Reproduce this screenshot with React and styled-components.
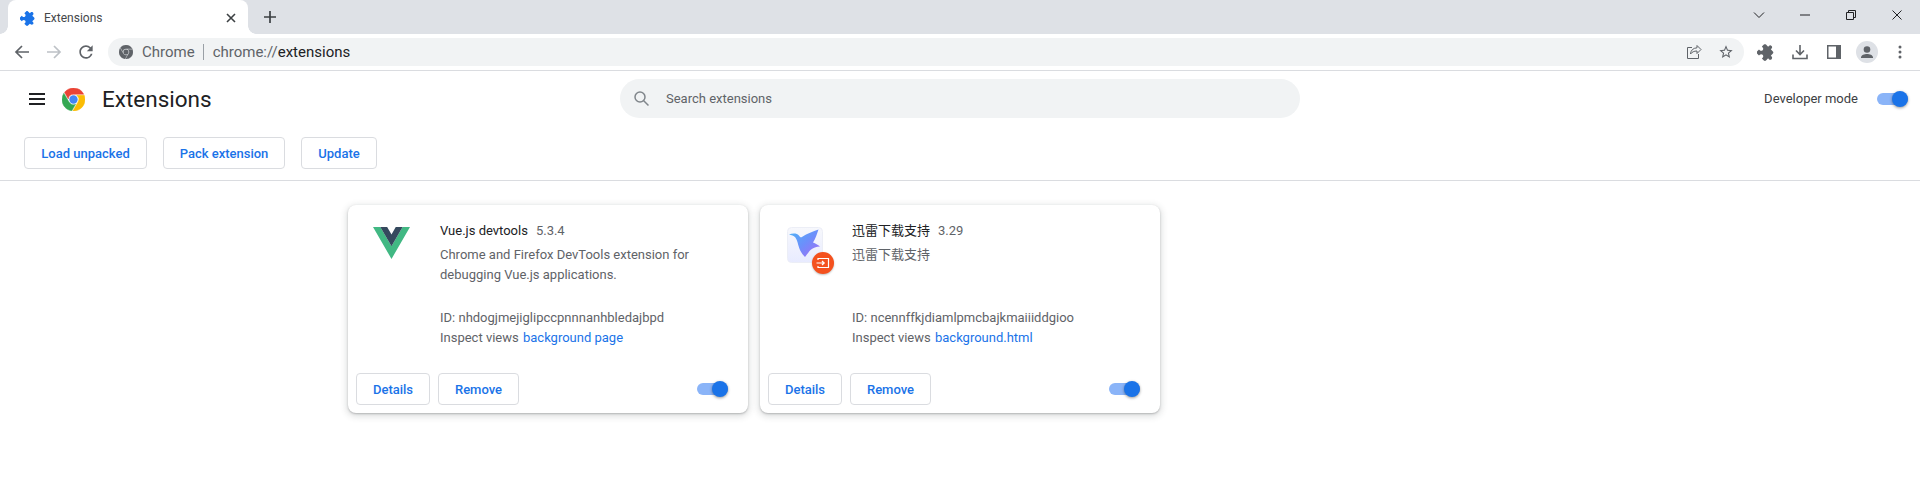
import React from 'react'
import styled, { createGlobalStyle } from 'styled-components'

const Global = createGlobalStyle`
  html, body { margin: 0; padding: 0; background: #fff; }
  body { font-family: Roboto, "Noto Sans CJK SC", sans-serif; font-size: 13px; color: #5f6368; overflow: hidden; }
`

const extensionPath = 'M20.5 11H19V7c0-1.1-.9-2-2-2h-4V3.5C13 2.12 11.88 1 10.5 1S8 2.12 8 3.5V5H4c-1.1 0-1.99.9-1.99 2v3.8H3.5c1.49 0 2.7 1.21 2.7 2.7s-1.21 2.7-2.7 2.7H2V20c0 1.1.9 2 2 2h3.8v-1.5c0-1.49 1.21-2.7 2.7-2.7 1.49 0 2.7 1.21 2.7 2.7V22H17c1.1 0 2-.9 2-2v-4h1.5c1.38 0 2.5-1.12 2.5-2.5S21.88 11 20.5 11z'
const chromeParts = {
  red: 'M12 0C8.21 0 4.831 1.757 2.632 4.501l3.953 6.848A5.454 5.454 0 0 1 12 6.545h10.691A12 12 0 0 0 12 0z',
  green: 'M1.931 5.47A11.943 11.943 0 0 0 0 12c0 6.012 4.42 10.991 10.189 11.864l3.953-6.847a5.45 5.45 0 0 1-6.865-2.29z',
  yellow: 'M15.273 7.636a5.446 5.446 0 0 1 1.45 7.09l.002.001h-.002l-5.344 9.257c.206.01.413.016.621.016 6.627 0 12-5.373 12-12 0-1.54-.29-3.011-.818-4.364z',
  blue: 'M12 16.364a4.364 4.364 0 1 1 0-8.728 4.364 4.364 0 0 1 0 8.728Z',
}

const PuzzleIcon = ({ size, color }) => (
  <svg width={size} height={size} viewBox="0 0 24 24"><path fill={color} d={extensionPath} transform="rotate(45 12 12) translate(1 0)" /></svg>
)

const ChromeLogo = ({ size, mono }) => (
  <svg width={size} height={size} viewBox="0 0 24 24">
    <path fill={mono || '#ea4335'} stroke={mono || '#ea4335'} strokeWidth=".5" d={chromeParts.red} />
    <path fill={mono || '#34a853'} stroke={mono || '#34a853'} strokeWidth=".5" d={chromeParts.green} />
    <path fill={mono || '#fbbc04'} stroke={mono || '#fbbc04'} strokeWidth=".5" d={chromeParts.yellow} />
    <path fill={mono || '#4285f4'} d={chromeParts.blue} />
  </svg>
)

const VueLogo = () => (
  <svg width="37" height="32" viewBox="0 0 256 221">
    <path fill="#41b883" d="M0 0l128 220.8L256 0h-51.2L128 132.48 50.56 0z" />
    <path fill="#35495e" d="M50.56 0L128 133.12 204.8 0h-47.36L128 51.2 97.92 0z" />
  </svg>
)

const BirdLogo = () => (
  <svg width="36" height="36" viewBox="0 0 36 36">
    <defs>
      <linearGradient id="birdBg" x1="0" y1="0" x2="0" y2="1">
        <stop offset="0" stopColor="#f7f8fc" />
        <stop offset="1" stopColor="#e8ebff" />
      </linearGradient>
      <linearGradient id="birdFill" x1="0" y1="0" x2="1" y2="1">
        <stop offset="0" stopColor="#4db5f5" />
        <stop offset=".5" stopColor="#6c8ffb" />
        <stop offset="1" stopColor="#a96af4" />
      </linearGradient>
    </defs>
    <rect x=".5" y=".5" width="35" height="35" rx="4" fill="url(#birdBg)" stroke="#eceef6" />
    <path fill="url(#birdFill)" d="M2 7.5C4.500 6.500 7.500 6.200 9.800 7c1.500.6 2.400 1.800 3.200 3 .8.6 1.500.4 2.300-.2C20 6.500 26 4.500 31.500 2.500 30 7 28.500 11.500 26 15.500c2.500.8 4.800 2.400 7 4-3.800.2-6.800 1.200-9.200 3.200-2 1.800-3.800 4.800-5.800 7.300-2.500-2.500-4.600-5.500-5.800-9C10.800 17 10.300 13 8.200 10.300 6.800 8.800 4.500 8 2 7.500z" />
  </svg>
)

const Page = styled.div`
  width: 1920px;
  height: 495px;
  display: flex;
  flex-direction: column;
`
const TabStrip = styled.div`
  height: 34px;
  background: #dee1e6;
  display: flex;
  align-items: flex-end;
  padding-left: 8px;
`
const Tab = styled.div`
  position: relative;
  width: 240px;
  height: 34px;
  box-sizing: border-box;
  background: #fff;
  border-radius: 8px 8px 0 0;
  padding: 2px 9px 0 12px;
  display: flex;
  align-items: center;
  gap: 8px;
  &::before, &::after {
    content: '';
    position: absolute;
    bottom: 0;
    width: 8px;
    height: 8px;
  }
  &::before {
    left: -8px;
    background: radial-gradient(circle at 0 0, #dee1e6 7.5px, #fff 8px);
  }
  &::after {
    right: -8px;
    background: radial-gradient(circle at 100% 0, #dee1e6 7.5px, #fff 8px);
  }
`
const TabTitle = styled.span`
  flex: 1;
  font-size: 12px;
  color: #45474a;
`
const IconSlot = styled.span`
  width: 16px;
  height: 16px;
  display: flex;
  align-items: center;
  justify-content: center;
  flex: none;
`
const NewTab = styled(IconSlot)`
  margin-left: 14px;
  align-self: center;
`
const StripSpacer = styled.div`
  flex: 1;
`
const WindowControls = styled.div`
  display: flex;
  align-self: flex-start;
`
const WindowButton = styled.div`
  width: 46px;
  height: 30px;
  display: flex;
  align-items: center;
  justify-content: center;
`
const Toolbar = styled.div`
  height: 36px;
  background: #fff;
  border-bottom: 1px solid #dadce0;
  display: flex;
  align-items: center;
  padding-left: 6px;
`
const NavButton = styled.div`
  width: 32px;
  height: 32px;
  display: flex;
  align-items: center;
  justify-content: center;
  flex: none;
`
const Omnibox = styled.div`
  width: 1636px;
  height: 28px;
  margin-left: 6px;
  border-radius: 14px;
  background: #f1f3f4;
  display: flex;
  align-items: center;
  padding: 0 2px 0 11px;
  box-sizing: border-box;
  font-size: 15px;
  flex: none;
`
const Scheme = styled.span`
  color: #5f6368;
  margin-left: 9px;
`
const Divider = styled.span`
  width: 1px;
  height: 16px;
  background: #9aa0a6;
  margin: 0 9px 0 8px;
`
const UrlHost = styled.span`
  color: #5f6368;
`
const UrlPath = styled.span`
  color: #202124;
`
const OmniSpacer = styled.div`
  flex: 1;
`
const OmniAction = styled.div`
  width: 32px;
  display: flex;
  justify-content: center;
`
const ToolActions = styled.div`
  display: flex;
  align-items: center;
  margin-left: 5px;
`
const ToolAction = styled.div`
  width: ${p => p.$w || 34}px;
  height: 32px;
  display: flex;
  align-items: center;
  justify-content: center;
`
const Avatar = styled.div`
  width: 22px;
  height: 22px;
  border-radius: 50%;
  background: #dee1e6;
  display: flex;
  align-items: center;
  justify-content: center;
  overflow: hidden;
`
const Header = styled.div`
  height: 109px;
  border-bottom: 1px solid #dadce0;
  display: flex;
  flex-direction: column;
  flex: none;
`
const TopRow = styled.div`
  height: 55px;
  display: grid;
  grid-template-columns: 1fr 680px 1fr;
  align-items: center;
`
const Brand = styled.div`
  display: flex;
  align-items: center;
  padding-left: 29px;
  padding-top: 1px;
`
const Hamburger = styled.div`
  width: 16px;
  height: 12px;
  border-top: 2px solid #202124;
  border-bottom: 2px solid #202124;
  box-sizing: border-box;
  position: relative;
  margin-right: 17px;
  &::after {
    content: '';
    position: absolute;
    left: 0;
    right: 0;
    top: 3px;
    height: 2px;
    background: #202124;
  }
`
const Title = styled.h1`
  margin: 0 0 0 17px;
  font-size: 22.5px;
  font-weight: 400;
  color: #202124;
`
const Search = styled.div`
  height: 39px;
  border-radius: 20px;
  background: #f1f3f4;
  display: flex;
  align-items: center;
  padding-left: 13px;
  gap: 16px;
  font-size: 13px;
  color: #5f6368;
`
const DevMode = styled.div`
  display: flex;
  align-items: center;
  justify-content: flex-end;
  padding-right: 12px;
  gap: 19px;
  color: #3c4043;
`
const Actions = styled.div`
  display: flex;
  gap: 16px;
  padding: 11px 0 0 24px;
`
const Button = styled.button`
  height: 32px;
  padding: 0;
  width: ${p => p.$w}px;
  border: 1px solid #dadce0;
  border-radius: 4px;
  background: #fff;
  color: #1a73e8;
  font: 500 13px Roboto, sans-serif;
`
const Toggle = styled.div`
  width: 31px;
  height: 12px;
  border-radius: 6px;
  background: #8ab4f8;
  position: relative;
  flex: none;
  &::after {
    content: '';
    position: absolute;
    right: 0;
    top: -2px;
    width: 16px;
    height: 16px;
    border-radius: 50%;
    background: #1a73e8;
    box-shadow: 0 1px 3px rgba(0, 0, 0, .4);
  }
`
const Grid = styled.div`
  display: grid;
  grid-template-columns: repeat(3, 400px);
  gap: 12px;
  justify-content: center;
  padding-top: 24px;
`
const Card = styled.div`
  height: 208px;
  box-sizing: border-box;
  border-radius: 8px;
  background: #fff;
  box-shadow: 0 1px 2px 0 rgba(60, 64, 67, .3), 0 2px 6px 2px rgba(60, 64, 67, .15);
  display: flex;
  flex-direction: column;
`
const CardMain = styled.div`
  height: 168px;
  box-sizing: border-box;
  display: flex;
  padding: 17px 20px 0 0;
  flex: none;
`
const IconBox = styled.div`
  width: 92px;
  flex: none;
  padding: 5px 0 0 ${p => p.$left}px;
  box-sizing: border-box;
`
const BadgedIcon = styled.div`
  position: relative;
  width: 36px;
  height: 36px;
`
const Badge = styled.div`
  position: absolute;
  right: -11px;
  bottom: -11px;
  width: 22px;
  height: 22px;
  border-radius: 50%;
  background: #f4511e;
  box-shadow: 0 1px 2px rgba(0, 0, 0, .25);
  display: flex;
  align-items: center;
  justify-content: center;
`
const Info = styled.div`
  display: flex;
  flex-direction: column;
  line-height: 20px;
`
const NameRow = styled.div`
  display: flex;
  gap: 8px;
  line-height: 18px;
`
const Name = styled.span`
  color: #202124;
`
const Version = styled.span`
  color: #5f6368;
`
const Description = styled.div`
  height: 40px;
  margin-top: 5px;
  width: 270px;
`
const Meta = styled.div`
  margin-top: 23px;
`
const InspectLink = styled.a`
  color: #1a73e8;
  margin-left: 1px;
`
const CardFooter = styled.div`
  display: flex;
  align-items: center;
  gap: 8px;
  padding: 0 20px 0 8px;
  height: 32px;
`
const FooterSpacer = styled.div`
  flex: 1;
`

const extensions = [
  {
    name: 'Vue.js devtools',
    version: '5.3.4',
    description: 'Chrome and Firefox DevTools extension for debugging Vue.js applications.',
    id: 'nhdogjmejiglipccpnnnanhbledajbpd',
    view: 'background page',
    left: 25,
    icon: <VueLogo />,
  },
  {
    name: '迅雷下载支持',
    version: '3.29',
    description: '迅雷下载支持',
    id: 'ncennffkjdiamlpmcbajkmaiiiddgioo',
    view: 'background.html',
    left: 27,
    icon: (
      <BadgedIcon>
        <BirdLogo />
        <Badge>
          <svg width="14" height="14" viewBox="0 0 14 14" fill="none" stroke="#fff" strokeWidth="1.2">
            <path d="M2 4V2.500h10.500v9H2V10" />
            <path d="M.5 7h7.500M6 5l2.200 2L6 9" />
          </svg>
        </Badge>
      </BadgedIcon>
    ),
  },
]

export default function App() {
  return (
    <Page>
      <Global />
      <TabStrip>
        <Tab>
          <IconSlot><PuzzleIcon size={16} color="#1a73e8" /></IconSlot>
          <TabTitle>Extensions</TabTitle>
          <IconSlot>
            <svg width="10" height="10" viewBox="0 0 10 10" stroke="#3c4043" strokeWidth="1.6"><path d="M1 1l8 8M9 1l-8 8" /></svg>
          </IconSlot>
        </Tab>
        <NewTab>
          <svg width="14" height="14" viewBox="0 0 14 14" stroke="#3c4043" strokeWidth="1.7"><path d="M7 1v12M1 7h12" /></svg>
        </NewTab>
        <StripSpacer />
        <WindowControls>
          <WindowButton>
            <svg width="12" height="8" viewBox="0 0 12 8" fill="none" stroke="#202124"><path d="M1 1.500l5 5 5-5" /></svg>
          </WindowButton>
          <WindowButton>
            <svg width="10" height="2" viewBox="0 0 10 2" stroke="#202124"><path d="M0 1h10" /></svg>
          </WindowButton>
          <WindowButton>
            <svg width="10" height="10" viewBox="0 0 10 10" fill="none" stroke="#202124"><path d="M.5 2.500h7v7h-7zM2.500 2.500v-2h7v7h-2" /></svg>
          </WindowButton>
          <WindowButton>
            <svg width="10" height="10" viewBox="0 0 10 10" stroke="#202124"><path d="M.5.5l9 9M9.500.5l-9 9" /></svg>
          </WindowButton>
        </WindowControls>
      </TabStrip>
      <Toolbar>
        <NavButton>
          <svg width="16" height="16" viewBox="0 0 16 16" fill="none" stroke="#5f6368" strokeWidth="1.7"><path d="M15 8H2M8 2L2 8l6 6" /></svg>
        </NavButton>
        <NavButton>
          <svg width="16" height="16" viewBox="0 0 16 16" fill="none" stroke="#bdc1c6" strokeWidth="1.7"><path d="M1 8h13M8 2l6 6-6 6" /></svg>
        </NavButton>
        <NavButton>
          <svg width="20" height="20" viewBox="0 0 24 24"><path fill="#5f6368" d="M17.650 6.350A7.958 7.958 0 0 0 12 4c-4.420 0-7.990 3.580-7.990 8s3.570 8 7.990 8c3.730 0 6.840-2.550 7.730-6h-2.080A5.990 5.990 0 0 1 12 18c-3.310 0-6-2.690-6-6s2.690-6 6-6c1.660 0 3.140.69 4.220 1.780L13 11h7V4l-2.350 2.350z" /></svg>
        </NavButton>
        <Omnibox>
          <ChromeLogo size={14} mono="#5f6368" />
          <Scheme>Chrome</Scheme>
          <Divider />
          <UrlHost>chrome://</UrlHost>
          <UrlPath>extensions</UrlPath>
          <OmniSpacer />
          <OmniAction>
            <svg width="16" height="16" viewBox="0 0 16 16" fill="none" stroke="#5f6368"><path d="M6 3.500H1.500v11h11V10" /><path d="M15 5.500l-4-4v2.300C7 4 4.700 6.500 4.500 10c1.500-2 3.500-3 6.500-3v2.500z" /></svg>
          </OmniAction>
          <OmniAction>
            <svg width="16" height="16" viewBox="0 0 24 24"><path fill="#5f6368" d="M22 9.240l-7.190-.62L12 2 9.190 8.630 2 9.240l5.460 4.730L5.820 21 12 17.270 18.180 21l-1.630-7.030L22 9.240zM12 15.400l-3.760 2.270 1-4.280-3.320-2.880 4.380-.38L12 6.100l1.710 4.040 4.380.38-3.320 2.880 1 4.280L12 15.400z" /></svg>
          </OmniAction>
        </Omnibox>
        <ToolActions>
          <ToolAction><PuzzleIcon size={18} color="#5f6368" /></ToolAction>
          <ToolAction>
            <svg width="16" height="16" viewBox="0 0 16 16" fill="none" stroke="#5f6368" strokeWidth="1.6"><path d="M8 1v9M4 6.500L8 10.500l4-4M1 10.500v4h14v-4" /></svg>
          </ToolAction>
          <ToolAction>
            <svg width="14" height="14" viewBox="0 0 14 14"><path fill="#5f6368" d="M0 0h14v14H0z" /><path fill="#fff" d="M1.500 1.500H9v11H1.500z" /></svg>
          </ToolAction>
          <ToolAction $w={32}>
            <Avatar>
              <svg width="22" height="22" viewBox="0 0 22 22"><circle cx="11" cy="8.500" r="3.300" fill="#5f6368" /><path fill="#5f6368" d="M5 16.500c0-2.400 3.500-3.500 6-3.500s6 1.100 6 3.500V17H5z" /></svg>
            </Avatar>
          </ToolAction>
          <ToolAction>
            <svg width="4" height="14" viewBox="0 0 4 14" fill="#5f6368"><circle cx="2" cy="2" r="1.500" /><circle cx="2" cy="7" r="1.500" /><circle cx="2" cy="12" r="1.500" /></svg>
          </ToolAction>
        </ToolActions>
      </Toolbar>
      <Header>
        <TopRow>
          <Brand>
            <Hamburger />
            <ChromeLogo size={23} />
            <Title>Extensions</Title>
          </Brand>
          <Search>
            <svg width="17" height="17" viewBox="0 0 17 17" fill="none" stroke="#80868b" strokeWidth="1.5"><circle cx="7" cy="7" r="5" /><path d="M10.500 10.500l5 5" /></svg>
            Search extensions
          </Search>
          <DevMode>
            Developer mode
            <Toggle />
          </DevMode>
        </TopRow>
        <Actions>
          <Button $w={123}>Load unpacked</Button>
          <Button $w={122}>Pack extension</Button>
          <Button $w={76}>Update</Button>
        </Actions>
      </Header>
      <Grid>
        {extensions.map(ext => (
          <Card key={ext.id}>
            <CardMain>
              <IconBox $left={ext.left}>{ext.icon}</IconBox>
              <Info>
                <NameRow>
                  <Name>{ext.name}</Name>
                  <Version>{ext.version}</Version>
                </NameRow>
                <Description>{ext.description}</Description>
                <Meta>
                  <div>ID: {ext.id}</div>
                  <div>Inspect views <InspectLink>{ext.view}</InspectLink></div>
                </Meta>
              </Info>
            </CardMain>
            <CardFooter>
              <Button $w={74}>Details</Button>
              <Button $w={81}>Remove</Button>
              <FooterSpacer />
              <Toggle />
            </CardFooter>
          </Card>
        ))}
      </Grid>
    </Page>
  )
}
